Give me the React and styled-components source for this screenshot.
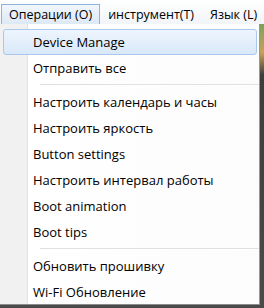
import React from "react";
import styled, { createGlobalStyle } from "styled-components";

const GlobalStyle = createGlobalStyle`
  html, body {
    margin: 0;
    padding: 0;
    background: #4a4a4a;
  }
  body {
    font-family: "Open Sans", "Noto Sans", "Liberation Sans", sans-serif;
    font-size: 12px;
    color: #000;
  }
`;

const Window = styled.div`
  position: relative;
  width: 264px;
  height: 308px;
  overflow: hidden;
  display: flex;
  flex-direction: column;
`;

const MenuBar = styled.div`
  height: 24px;
  box-sizing: border-box;
  padding: 4px 0 0 1px;
  display: flex;
  align-items: stretch;
  background: linear-gradient(#ffffff, #f1f4f8);
`;

const BarItem = styled.div`
  display: flex;
  align-items: center;
  padding: 0 7px 0 7px;
  box-sizing: border-box;
  white-space: nowrap;
  font-size: 12.5px;
  border: 1px solid ${(p) => (p.$active ? "#90b4d9" : "transparent")};
  border-bottom: none;
  background: ${(p) => (p.$active ? "linear-gradient(#f0f6fc, #dde9f6)" : "transparent")};
`;

const AppArea = styled.div`
  flex: 1;
  display: flex;
  justify-content: flex-end;
`;

const Edge = styled.div`
  width: 5px;
  background: linear-gradient(#7aa15a 0, #c7a15a 10%, #3d3d3d 18%, #4b4b4b 100%);
`;

const Dropdown = styled.div`
  position: absolute;
  top: 24px;
  left: 0;
  width: 260px;
  height: 281px;
  box-sizing: border-box;
  border-right: 1px solid #979797;
  border-bottom: 1px solid #8c8c8c;
  background: linear-gradient(to right, #f1f1f1 0, #f1f1f1 27px, #e2e3e3 27px, #e2e3e3 28px, #ffffff 28px, #fcfcfc 100%);
  padding: 5px 2px 0 3px;
  display: flex;
  flex-direction: column;
`;

const Item = styled.div`
  flex: none;
  height: 26px;
  display: flex;
  align-items: center;
  padding-left: 29px;
  box-sizing: border-box;
  white-space: nowrap;
  font-size: 13px;
  border-radius: 3px;
  border: 1px solid ${(p) => (p.$hover ? "#a8c8ec" : "transparent")};
  background: ${(p) => (p.$hover ? "linear-gradient(#eef5fd, #d9e8f8)" : "transparent")};
`;

const Separator = styled.div`
  flex: none;
  height: 8px;
  margin-right: -2px;
  display: flex;
  align-items: center;
  padding-left: 37px;
  &::after {
    content: "";
    flex: 1;
    height: 1px;
    border-bottom: 1px solid #ffffff;
    background: #e0e0e0;
  }
`;

const groups = [
  ["Device Manage", "Отправить все"],
  [
    "Настроить календарь и часы",
    "Настроить яркость",
    "Button settings",
    "Настроить интервал работы",
    "Boot animation",
    "Boot tips",
  ],
  ["Обновить прошивку", "Wi-Fi Обновление"],
];

export default function App() {
  return (
    <Window>
      <GlobalStyle />
      <MenuBar>
        <BarItem $active>Операции (O)</BarItem>
        <BarItem>инструмент(T)</BarItem>
        <BarItem>Язык (L)</BarItem>
      </MenuBar>
      <AppArea>
        <Edge />
      </AppArea>
      <Dropdown>
        {groups.map((group, gi) => (
          <React.Fragment key={gi}>
            {gi > 0 && <Separator />}
            {group.map((label, i) => (
              <Item key={label} $hover={gi === 0 && i === 0}>
                {label}
              </Item>
            ))}
          </React.Fragment>
        ))}
      </Dropdown>
    </Window>
  );
}
